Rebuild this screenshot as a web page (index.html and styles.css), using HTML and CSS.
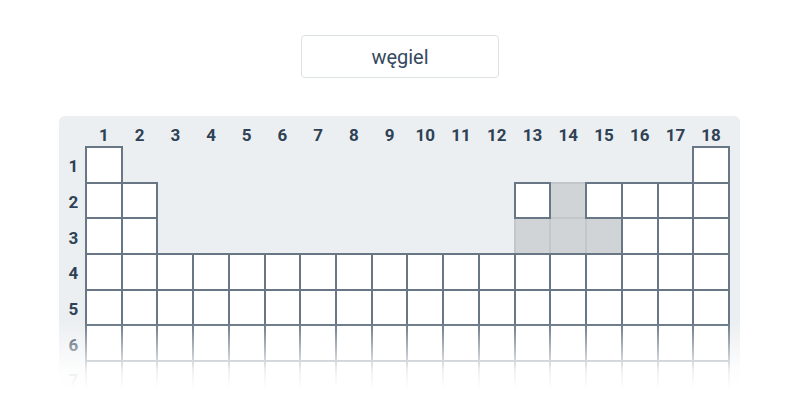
FILE: index.html
```html
<!DOCTYPE html>
<html lang="pl">
<head>
<meta charset="UTF-8">
<meta name="viewport" content="width=device-width, initial-scale=1.0">
<title>Układ okresowy</title>
<link rel="stylesheet" href="styles.css">
</head>
<body>

<div class="page">
    <div class="search">węgiel</div>

    <div class="panel">
        <div class="table" id="table"></div>
        <div class="fade"></div>
    </div>
</div>

<script>
// ktore pola sa w ukladzie (okres -> grupy)
function hasCell(row, col) {
    if (row === 1) return col === 1 || col === 18;
    if (row === 2 || row === 3) return col <= 2 || col >= 13;
    return true;
}

// pola podswietlone wokol wegla
const marked = ['2-14', '3-13', '3-14', '3-15'];

const table = document.getElementById('table');

table.appendChild(document.createElement('div'));
for (let col = 1; col <= 18; col++) {
    const head = document.createElement('div');
    head.className = 'col-label';
    head.innerText = col;
    table.appendChild(head);
}

for (let row = 1; row <= 7; row++) {
    const label = document.createElement('div');
    label.className = 'row-label';
    label.innerText = row;
    table.appendChild(label);

    for (let col = 1; col <= 18; col++) {
        const cell = document.createElement('div');
        if (hasCell(row, col)) {
            cell.className = marked.includes(row + '-' + col) ? 'cell marked' : 'cell';
        }
        table.appendChild(cell);
    }
}
</script>

</body>
</html>
```

FILE: styles.css
```css
body {
    margin: 0;
    background-color: #fff;
    font-family: Roboto, "Liberation Sans", sans-serif;
    color: #2f4255;
}

.page {
    padding-top: 35px;
}

.search {
    box-sizing: border-box;
    width: 198px;
    height: 43px;
    margin: 0 auto;
    border: 1px solid #dde2e5;
    border-radius: 4px;
    display: flex;
    align-items: center;
    justify-content: center;
    font-size: 20px;
    color: #34495e;
}

.panel {
    position: relative;
    width: 681px;
    margin: 38px 0 0 59px;
    padding-right: 11px;
    box-sizing: border-box;
    background-color: #eceff1;
    border-radius: 6px;
}

.table {
    display: grid;
    grid-template-columns: 27px repeat(18, 1fr);
    grid-template-rows: 31px repeat(7, 35.7px);
}

.col-label {
    display: flex;
    align-items: flex-end;
    justify-content: center;
    padding-bottom: 2px;
    font-size: 17px;
    font-weight: 700;
}

.row-label {
    display: flex;
    align-items: center;
    justify-content: center;
    padding: 3px 0 0 2px;
    font-size: 17px;
    font-weight: 700;
}

.cell {
    position: relative;
    z-index: 1;
    background-color: #fff;
    border: 2px solid #687685;
    margin: -1px;
}

.cell.marked {
    z-index: 0;
    background-color: #d1d4d7;
    border-color: #c3c7cb;
}

.fade {
    position: absolute;
    z-index: 2;
    left: 0;
    right: 0;
    top: 206px;
    bottom: -4px;
    background: linear-gradient(rgba(255, 255, 255, 0) 0, rgba(255, 255, 255, 0.9) 62%, #fff 85%);
}
```
